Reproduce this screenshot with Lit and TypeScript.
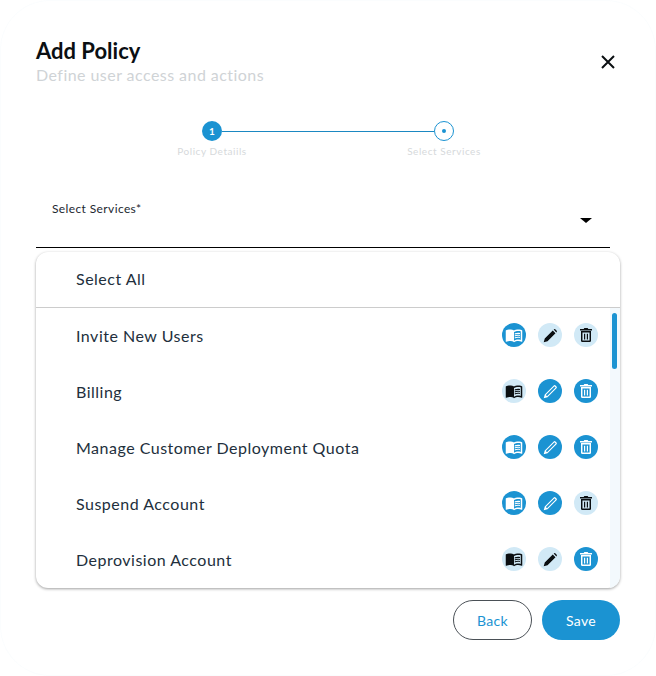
import { LitElement, html, css, svg } from "lit";
import { customElement } from "lit/decorators.js";

const book = svg`<path d="M21 5c-1.11-.35-2.33-.5-3.5-.5-1.95 0-4.05.4-5.5 1.5-1.45-1.1-3.55-1.5-5.5-1.5S2.45 4.9 1 6v14.65c0 .25.25.5.5.5.1 0 .15-.05.25-.05C3.1 20.45 5.05 20 6.5 20c1.95 0 4.05.4 5.5 1.5 1.35-.85 3.8-1.5 5.5-1.5 1.65 0 3.35.3 4.75 1.05.1.05.15.05.25.05.25 0 .5-.25.5-.5V6c-.6-.45-1.25-.75-2-1zm0 13.5c-1.1-.35-2.3-.5-3.5-.5-1.7 0-4.15.65-5.5 1.5V8c1.35-.85 3.8-1.5 5.5-1.5 1.2 0 2.4.15 3.5.5v11.5z"/><path d="M17.5 10.5c.88 0 1.73.09 2.5.26V9.24c-.79-.15-1.64-.24-2.5-.24-1.7 0-3.24.29-4.5.83v1.66c1.13-.64 2.7-.99 4.5-.99zM13 12.49v1.66c1.13-.64 2.7-.99 4.5-.99.88 0 1.73.09 2.5.26V11.9c-.79-.15-1.64-.24-2.5-.24-1.7 0-3.24.3-4.5.83zM17.5 14.33c-1.7 0-3.24.29-4.5.83v1.66c1.13-.64 2.7-.99 4.5-.99.88 0 1.73.09 2.5.26v-1.52c-.79-.16-1.64-.24-2.5-.24z"/>`;
const pen = svg`<path fill-rule="evenodd" d="M2.4 21.6l1.5-5.4L16.6 3.5a1.8 1.8 0 0 1 2.5 0l1.4 1.4a1.8 1.8 0 0 1 0 2.5L7.8 20.1zM5.4 16.9l1.7 1.7L19 6.7a.5.5 0 0 0 0-.7l-1-1a.5.5 0 0 0-.7 0z"/>`;
const penFilled = svg`<path d="M2.4 21.6l1.5-5.4L15.2 4.9l3.9 3.9L7.8 20.1zM16.4 3.7l.2-.2a1.8 1.8 0 0 1 2.5 0l1.4 1.4a1.8 1.8 0 0 1 0 2.5l-.2.2z"/>`;
const trash = svg`<path fill-rule="evenodd" d="M4.5 6h15v14.5a2 2 0 0 1-2 2h-11a2 2 0 0 1-2-2zM6.7 8.2v12h10.6v-12z"/><path d="M3 3h5.5l1-1.4h5l1 1.4H21v2.2H3zM9 10h1.8v8.6H9zM13.2 10H15v8.6h-1.8z"/>`;

const rows: [string, boolean, boolean, boolean][] = [
  ["Invite New Users", true, false, false],
  ["Billing", false, true, true],
  ["Manage Customer Deployment Quota", true, true, true],
  ["Suspend Account", true, true, false],
  ["Deprovision Account", false, false, true],
];

@customElement("app-root")
export class AppRoot extends LitElement {
  static styles = css`
    :host { display: block; width: 656px; height: 676px; background: #fff; font-family: Lato, "Noto Sans", sans-serif; color: #000; overflow: hidden; }
    .dialog { box-sizing: border-box; width: 656px; height: 676px; padding: 40px 36px 0; border-radius: 50px; box-shadow: inset 0 0 0 1px rgba(27,147,210,.02); display: flex; flex-direction: column; }
    .head { display: flex; justify-content: space-between; align-items: center; }
    h1 { margin: 0; font-size: 22px; line-height: 22px; font-weight: 700; color: #0b0f12; }
    .sub { margin-top: 3px; font-size: 16px; line-height: 20px; letter-spacing: .45px; color: #cfd3d6; }
    .close { display: block; width: 20px; height: 20px; margin: -2px 2px 0 0; fill: none; stroke: #0b0f12; stroke-width: 2; }
    .stepper { display: grid; grid-template-columns: 20px 212px 20px; justify-content: center; margin: 36px 0 0; }
    .dot { width: 20px; height: 20px; border-radius: 50%; box-sizing: border-box; display: flex; align-items: center; justify-content: center; background: #1b93d2; color: #fff; font-size: 10px; font-weight: 700; }
    .dot.cur { background: #fff; border: 1px solid #1b93d2; }
    .dot.cur::after { content: ""; width: 4px; height: 4px; border-radius: 50%; background: #1b93d2; }
    .line { height: 1px; background: #1b88c2; align-self: center; }
    .lab { grid-row: 2; font-size: 10px; line-height: 12px; letter-spacing: .55px; color: #d6d9db; margin-top: 4px; white-space: nowrap; justify-self: center; }
    .lab.a { grid-column: 1; }
    .lab.b { grid-column: 3; }
    .select { width: 574px; height: 58px; box-sizing: border-box; margin-top: 33px; border-bottom: 1px solid #000; padding: 12px 0 0 16px; display: flex; justify-content: space-between; font-size: 12px; line-height: 14px; letter-spacing: .38px; color: #1c2730; }
    .caret { width: 0; height: 0; border: 6px solid transparent; border-top: 5.5px solid #000; border-bottom: 0; margin: 16px 18px 0 0; }
    .card { margin-top: 4px; width: 584px; height: 336px; border-radius: 12px; background: #fff; box-shadow: 0 1px 3px rgba(0,0,0,.38); overflow: hidden; display: flex; flex-direction: column; }
    .all { flex: none; height: 56px; box-sizing: border-box; border-bottom: 1px solid #ccc; padding: 0 0 2px 40px; display: flex; align-items: center; font-size: 16px; letter-spacing: .5px; color: #222f3c; }
    .body { flex: 1; display: flex; min-height: 0; }
    .list { flex: 1; min-width: 0; margin-top: -1px; }
    .row { height: 56px; display: flex; align-items: center; padding: 0 12px 0 40px; font-size: 16px; letter-spacing: .5px; color: #222f3c; }
    .name { flex: 1; }
    .icons { display: grid; grid-template-columns: repeat(3, 24px); gap: 12px; }
    .ic { width: 24px; height: 24px; border-radius: 50%; background: #d1e9f6; display: flex; align-items: center; justify-content: center; }
    .ic.on { background: #1b93d2; }
    .ic svg { width: 16px; height: 16px; fill: #0b0f12; display: block; }
    .ic.on svg { fill: #fff; }
    .ic svg.book { width: 18px; height: 18px; }
    .ic svg.pen { width: 17px; height: 17px; }
    .track { flex: none; width: 10px; background: #f3f9fd; padding: 5px 3px 0 2px; box-sizing: border-box; }
    .thumb { height: 56px; border-radius: 3px; background: #1b93d2; }
    .foot { display: flex; justify-content: flex-end; gap: 10px; width: 584px; margin-top: 12px; }
    button { box-sizing: border-box; height: 40px; border-radius: 20px; font: 400 14px Lato, "Noto Sans", sans-serif; letter-spacing: .3px; padding: 0; }
    .back { width: 79px; background: #fff; border: 1px solid #4a5056; color: #1b93d2; }
    .save { width: 78px; background: #1b93d2; border: 0; color: #fff; }
  `;

  private icon(on: boolean, body: unknown, cls: string) {
    return html`<span class="ic ${on ? "on" : ""}"><svg class=${cls} viewBox="0 0 24 24">${body}</svg></span>`;
  }

  render() {
    return html`<div class="dialog">
      <div class="head">
        <div>
          <h1>Add Policy</h1>
          <div class="sub">Define user access and actions</div>
        </div>
        <svg class="close" viewBox="0 0 20 20"><path d="M4 4l12 12M16 4L4 16"/></svg>
      </div>
      <div class="stepper">
        <div class="dot">1</div>
        <div class="line"></div>
        <div class="dot cur"></div>
        <div class="lab a">Policy Detaiils</div>
        <div class="lab b">Select Services</div>
      </div>
      <div class="select"><span>Select Services*</span><span class="caret"></span></div>
      <div class="card">
        <div class="all">Select All</div>
        <div class="body">
          <div class="list">
            ${rows.map(([n, a, b, c]) => html`<div class="row">
              <span class="name">${n}</span>
              <span class="icons">
                ${this.icon(a, book, "book")}
                ${this.icon(b, b ? pen : penFilled, "pen")}
                ${this.icon(c, trash, "trash")}
              </span>
            </div>`)}
          </div>
          <div class="track"><div class="thumb"></div></div>
        </div>
      </div>
      <div class="foot">
        <button class="back">Back</button>
        <button class="save">Save</button>
      </div>
    </div>`;
  }
}
